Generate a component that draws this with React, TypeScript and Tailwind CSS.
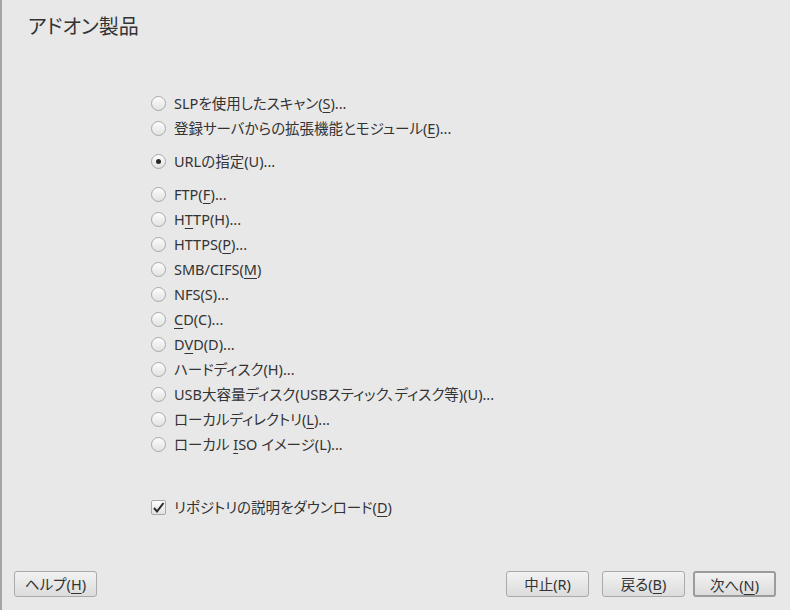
import React from 'react';

const U = ({ children }: { children: React.ReactNode }) => (
  <span className="underline decoration-1 underline-offset-[3px]">{children}</span>
);

const Radio = ({ checked, label }: { checked?: boolean; label: React.ReactNode }) => (
  <div className="flex items-center h-[25px]">
    <span className="w-[15px] h-[15px] rounded-full border border-[#a9a9a9] bg-gradient-to-b from-[#fdfdfd] to-[#e2e2e2] flex items-center justify-center shrink-0">
      {checked && <span className="w-[5px] h-[5px] rounded-full bg-[#2a2a2a]" />}
    </span>
    <span className="ml-[8px] text-[14.5px] leading-[25px]">{label}</span>
  </div>
);

const Button = ({ children, primary }: { children: React.ReactNode; primary?: boolean }) => (
  <button
    className={`h-[26px] w-[83px] rounded-[3px] bg-gradient-to-b from-[#f2f2f2] to-[#dcdcdc] text-[14.5px] leading-[24px] text-[#333333] ${
      primary ? 'border-2 border-[#9c9c9c]' : 'border border-[#aaaaaa]'
    }`}
  >
    {children}
  </button>
);

export default function App() {
  return (
    <div
      className="w-[790px] h-[610px] bg-[#e8e8e8] text-[#333333] flex flex-col border-l-2 border-[#a4a4a4] [font-feature-settings:'palt']"
      style={{ fontFamily: '"Noto Sans", "Noto Sans CJK JP", sans-serif' }}
    >
      <div className="pt-[13px] pl-[26px] text-[20px] leading-[28px]">アドオン製品</div>

      <div className="pl-[149px] mt-[50px] flex flex-col">
        <Radio label={<>SLPを使用したスキャン(<U>S</U>)...</>} />
        <Radio label={<>登録サーバからの拡張機能とモジュール(<U>E</U>)...</>} />
        <div className="mt-[8px]">
          <Radio checked label={<>URLの指定(U)...</>} />
        </div>
        <div className="mt-[8px] flex flex-col">
          <Radio label={<>FTP(<U>F</U>)...</>} />
          <Radio label={<>H<U>T</U>TP(H)...</>} />
          <Radio label={<>HTTPS(<U>P</U>)...</>} />
          <Radio label={<>SMB/CIFS(<U>M</U>)</>} />
          <Radio label={<>NFS(S)...</>} />
          <Radio label={<><U>C</U>D(C)...</>} />
          <Radio label={<>D<U>V</U>D(D)...</>} />
          <Radio label={<>ハードディスク(H)...</>} />
          <Radio label={<>USB大容量ディスク(USBスティック、ディスク等)(U)...</>} />
          <Radio label={<>ローカルディレクトリ(<U>L</U>)...</>} />
          <Radio label={<>ローカル <U>I</U>SO イメージ(L)...</>} />
        </div>

        <div className="mt-[38px] flex items-center h-[25px]">
          <span className="w-[15px] h-[15px] rounded-[2px] border border-[#a9a9a9] bg-gradient-to-b from-[#fdfdfd] to-[#e2e2e2] flex items-center justify-center shrink-0">
            <svg width="13" height="13" viewBox="0 0 13 13">
              <path d="M2 7 L5 10.5 L11.5 2" fill="none" stroke="#2a2a2a" strokeWidth="2" />
            </svg>
          </span>
          <span className="ml-[8px] text-[14.5px] leading-[25px]">
            リポジトリの説明をダウンロード(<U>D</U>)
          </span>
        </div>
      </div>

      <div className="flex-1" />

      <div className="flex items-center pl-[12px] pr-[14px] pb-[13px]">
        <Button>
          ヘルプ(<U>H</U>)
        </Button>
        <div className="flex-1" />
        <Button>中止(R)</Button>
        <div className="ml-[13px]">
          <Button>
            戻る(<U>B</U>)
          </Button>
        </div>
        <div className="ml-[8px]">
          <Button primary>
            次へ(<U>N</U>)
          </Button>
        </div>
      </div>
    </div>
  );
}
